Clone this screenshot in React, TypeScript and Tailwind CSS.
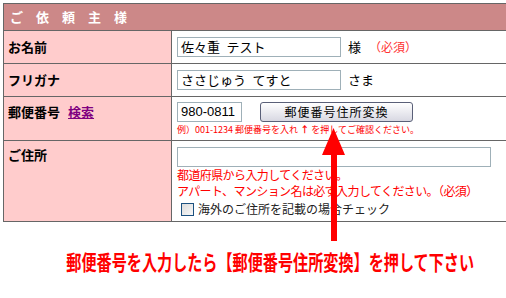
const jp = "font-['Noto_Sans_CJK_JP','Liberation_Sans',sans-serif]";

function Field({ className = "", value = "" }: { className?: string; value?: string }) {
  return (
    <div
      className={`flex h-[20px] items-center whitespace-pre border border-[#9fb0b8] bg-white px-[3px] text-[13px] text-black ${className}`}
    >
      {value}
    </div>
  );
}

function UpArrow() {
  return (
    <svg
      className="pointer-events-none absolute left-[321px] top-[128px]"
      width="26"
      height="114"
      viewBox="0 0 26 114"
    >
      <polygon points="12.5,0 1,27 24,27" fill="#ff0000" />
      <rect x="10" y="26" width="6" height="87" fill="#ff0000" />
    </svg>
  );
}

export default function App() {
  return (
    <div className={`relative h-[298px] w-[506px] overflow-hidden bg-white ${jp}`}>
      <div className="ml-[3px] mt-[3px] w-[505px] border border-[#666666]">
        <div className="flex h-[26px] items-center bg-[#cc8888] pl-[6px] text-[13px] font-bold tracking-[13px] text-white">
          ご依頼主様
        </div>

        <div className="flex h-[33px] border-t border-[#666666]">
          <div className="flex w-[168px] items-center border-r border-[#666666] bg-[#ffcccc] pl-[4px] text-[13px] font-bold">
            お名前
          </div>
          <div className="flex flex-1 items-center pl-[5px]">
            <Field className="w-[164px]" value={"佐々重\u2002テスト"} />
            <span className="ml-[7px] text-[13px]">様</span>
            <span className="ml-[8px] text-[12px] text-[#ff3333]">（必須）</span>
          </div>
        </div>

        <div className="flex h-[33px] border-t border-[#666666]">
          <div className="flex w-[168px] items-center border-r border-[#666666] bg-[#ffcccc] pl-[4px] text-[13px] font-bold">
            フリガナ
          </div>
          <div className="flex flex-1 items-center pl-[5px]">
            <Field className="h-[19px] w-[164px] px-[1px] text-[12px]" value={"ささじゅう\u2002てすと"} />
            <span className="ml-[7px] text-[13px]">さま</span>
          </div>
        </div>

        <div className="flex h-[44px] border-t border-[#666666]">
          <div className="flex w-[168px] items-start border-r border-[#666666] bg-[#ffcccc] pl-[4px] pt-[5px] text-[13px] font-bold">
            郵便番号
            <span className="ml-[8px] text-[#800080] underline">検索</span>
          </div>
          <div className="flex flex-1 flex-col pl-[5px] pt-[5px]">
            <div className="flex items-center">
              <Field className="w-[65px] font-['Liberation_Sans',sans-serif] text-[13px]" value="980-0811" />
              <button className="ml-[18px] h-[20px] w-[153px] rounded-[3px] border border-[#5a6078] bg-gradient-to-b from-white to-[#d8d8e2] text-[12px] tracking-[1px] text-black">
                郵便番号住所変換
              </button>
            </div>
            <div className="mt-[2px] text-[9px] leading-[12px] text-[#ff0000]">
              例）001-1234 郵便番号を入れ <b>↑</b> を押してご確認ください。
            </div>
          </div>
        </div>

        <div className="flex h-[81px] border-t border-[#666666]">
          <div className="flex w-[168px] items-start border-r border-[#666666] bg-[#ffcccc] pl-[4px] pt-[4px] text-[13px] font-bold">
            ご住所
          </div>
          <div className="flex flex-1 flex-col pl-[5px] pt-[6px]">
            <Field className="w-[314px]" />
            <div className="text-[12px] leading-[16px] tracking-[-0.6px] text-[#ff0000]">
              <div>都道府県から入力してください。</div>
              <div>アパート、マンション名は必ず入力してください。（必須）</div>
            </div>
            <div className="mt-[1px] flex items-center text-[12px] text-[#222]">
              <span className="ml-[4px] mr-[4px] h-[13px] w-[13px] border border-[#1c5180] bg-gradient-to-br from-[#dcdcdc] to-[#f8f8f8]" />
              海外のご住所を記載の場合チェック
            </div>
          </div>
        </div>
      </div>

      <div className="mt-[26px] flex justify-center pl-[34px]">
        <span className="inline-block scale-x-[0.72] whitespace-nowrap text-[21px] font-bold leading-[26px] text-[#ff0000]">
          郵便番号を入力したら【郵便番号住所変換】を押して下さい
        </span>
      </div>

      <UpArrow />
    </div>
  );
}
